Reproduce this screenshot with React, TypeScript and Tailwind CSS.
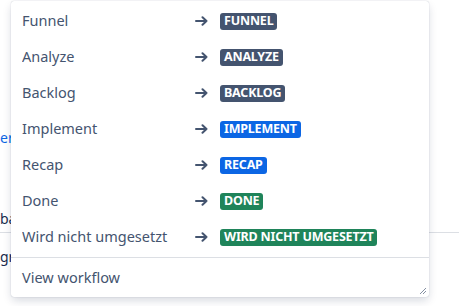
import React from "react";

type Status = { name: string; label: string; tone: "gray" | "blue" | "green" };

const statuses: Status[] = [
  { name: "Funnel", label: "FUNNEL", tone: "gray" },
  { name: "Analyze", label: "ANALYZE", tone: "gray" },
  { name: "Backlog", label: "BACKLOG", tone: "gray" },
  { name: "Implement", label: "IMPLEMENT", tone: "blue" },
  { name: "Recap", label: "RECAP", tone: "blue" },
  { name: "Done", label: "DONE", tone: "green" },
  { name: "Wird nicht umgesetzt", label: "WIRD NICHT UMGESETZT", tone: "green" },
];

const toneClasses: Record<Status["tone"], string> = {
  gray: "bg-[#44546f]",
  blue: "bg-[#0c66e4]",
  green: "bg-[#1f845a]",
};

function Arrow() {
  return (
    <svg width="13" height="10" viewBox="0 0 13 10" fill="none" className="text-[#44546f]">
      <path d="M1 5h10.5M7.5 1.2L11.5 5l-4 3.8" stroke="currentColor" strokeWidth="2" strokeLinecap="round" strokeLinejoin="round" />
    </svg>
  );
}

export default function App() {
  return (
    <div
      className="relative h-[306px] w-[459px] overflow-hidden bg-white text-[14px] text-[#172b4d]"
      style={{ fontFamily: '"Noto Sans", "Open Sans", sans-serif' }}
    >
      {/* page content behind the menu */}
      <div className="flex flex-col pt-[126px]">
        <div className="h-[24px] leading-[24px] text-[#0c66e4]">er</div>
        <div className="h-[57px]" />
        <div className="h-[24px] leading-[24px]">ba</div>
        <div className="mt-[1px] border-t border-[#dcdfe4]" />
        <div className="mt-[12px] h-[24px] leading-[24px]">gr</div>
      </div>

      {/* transition dropdown */}
      <div className="absolute left-[11px] top-[1px] flex h-[296px] w-[418px] flex-col rounded-[3px] bg-white shadow-[0_4px_10px_-1px_rgba(9,30,66,0.18),0_0_1px_rgba(9,30,66,0.31)]">
        <ul className="flex flex-col pt-[2px] pb-[2px]">
          {statuses.map((s) => (
            <li key={s.name} className="flex h-[36px] items-center pl-[11px] text-[14.5px] text-[#44546f]">
              <span className="w-[173px] truncate">{s.name}</span>
              <span className="flex w-[25px] items-center">
                <Arrow />
              </span>
              <span
                className={`inline-flex h-[17px] items-center rounded-[3px] px-[4px] text-[12.5px] font-bold leading-none tracking-[-0.2px] text-white ${toneClasses[s.tone]}`}
              >
                {s.label}
              </span>
            </li>
          ))}
        </ul>
        <div className="flex h-[40px] items-center border-t border-[#dcdfe4] pl-[11px] text-[14.5px] text-[#44546f]">
          View workflow
        </div>
        <svg width="8" height="8" viewBox="0 0 8 8" className="absolute bottom-[2px] right-[2px]">
          <path d="M7 1L1 7M7 4L4 7" stroke="#8590a2" strokeWidth="1" />
        </svg>
      </div>
    </div>
  );
}
